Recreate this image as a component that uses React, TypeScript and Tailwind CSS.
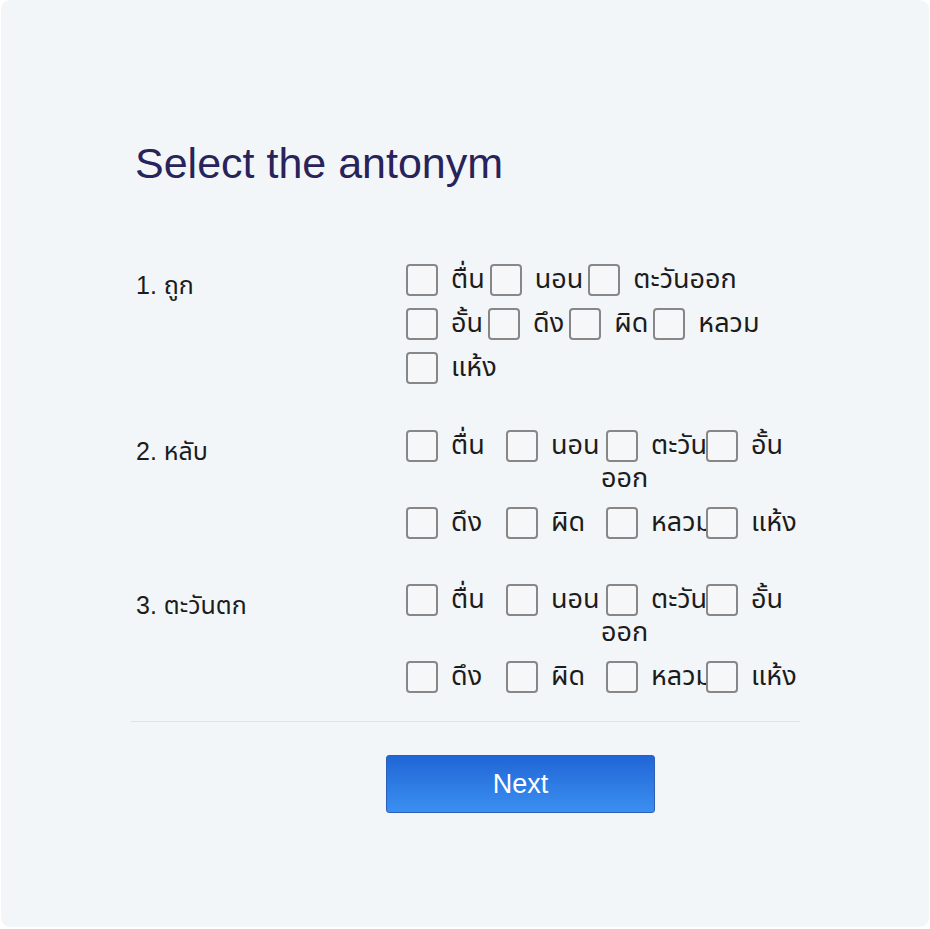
import React from 'react';

type Question = {
  label: string;
  layout: 'flow' | 'grid';
};

const options = ['ตื่น', 'นอน', 'ตะวันออก', 'อั้น', 'ดึง', 'ผิด', 'หลวม', 'แห้ง'];

// where a long option breaks when it sits in a narrow grid cell
const gridSplit: Record<string, [string, string]> = {
  'ตะวันออก': ['ตะวัน', 'ออก'],
};

const questions: Question[] = [
  { label: '1. ถูก', layout: 'flow' },
  { label: '2. หลับ', layout: 'grid' },
  { label: '3. ตะวันตก', layout: 'grid' },
];

const thai = '"Noto Sans Thai", "Noto Sans Thai UI", "Sarabun", "Loma", "Garuda", "Liberation Sans", sans-serif';

const Box: React.FC = () => (
  <span className="inline-block w-[32px] h-[32px] shrink-0 rounded-[4px] border-2 border-[#878787] bg-[#f5f7f9] ml-[5px] mr-[13px]" />
);

const Option: React.FC<{ text: string; narrow?: boolean }> = ({ text, narrow }) => {
  const parts = narrow && gridSplit[text] ? gridSplit[text] : [text, ''];
  return (
    <label className="flex flex-col cursor-pointer" style={{ fontFamily: thai }}>
      <span className="flex items-center h-[32px] whitespace-nowrap">
        <Box />
        <span>{parts[0]}</span>
      </span>
      {parts[1] && <span className="leading-[33px]">{parts[1]}</span>}
    </label>
  );
};

export default function App() {
  return (
    <div className="min-h-screen bg-white">
      <div
        className="ml-[1px] w-[928px] h-[927px] rounded-[9px] bg-[#f3f6f8] pt-[139px] pl-[130px] pr-[129px] text-[#1c1c1c]"
        style={{ fontFamily: '"Liberation Sans", "Noto Sans Thai", "Loma", "Noto Sans", sans-serif' }}
      >
        <h1 className="text-[43px] leading-[48px] text-[#28235a] pl-[4px]">Select the antonym</h1>

        <div className="mt-[77px] flex flex-col gap-[45px]">
          {questions.map((q) => (
            <div key={q.label} className="flex">
              <div className="w-[270px] shrink-0 pt-[3px] pl-[5px] text-[25px]">{q.label}</div>
              {q.layout === 'flow' ? (
                <div className="flex flex-wrap gap-y-[12px] pb-[1px] w-[399px] text-[27px]">
                  {options.map((o) => (
                    <Option key={o} text={o} />
                  ))}
                </div>
              ) : (
                <div className="grid grid-cols-[repeat(4,100px)] gap-y-[12px] w-[400px] text-[27px]">
                  {options.map((o) => (
                    <Option key={o} text={o} narrow />
                  ))}
                </div>
              )}
            </div>
          ))}
        </div>

        <div className="mt-[28px] h-px bg-[#dfe3e6]" />

        <div className="mt-[33px] pl-[255px]">
          <button className="w-[269px] h-[58px] rounded-[3px] border border-[#2c5fb8] bg-gradient-to-b from-[#2166d6] to-[#3b8ff1] text-white text-[27px]">
            Next
          </button>
        </div>
      </div>
    </div>
  );
}
